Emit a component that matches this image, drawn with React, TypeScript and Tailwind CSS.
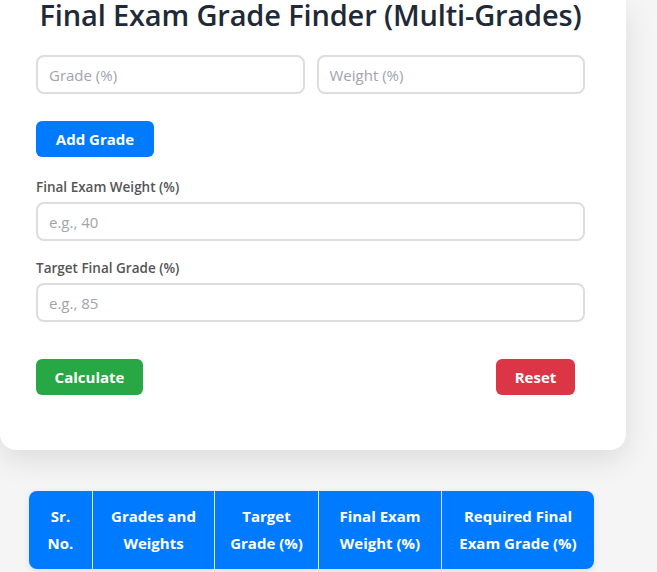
import React from "react";

// 成績入力フォームのスクリーン（上部はスクロールで切れている状態）
const HEADERS = [
  { label: ["Sr.", "No."], w: "w-[63px]" },
  { label: ["Grades and", "Weights"], w: "w-[122px]" },
  { label: ["Target", "Grade (%)"], w: "w-[104px]" },
  { label: ["Final Exam", "Weight (%)"], w: "w-[123px]" },
  { label: ["Required Final", "Exam Grade (%)"], w: "flex-1" },
];

const inputCls =
  "h-[39px] w-full rounded-lg border-2 border-[#dddddd] bg-white px-[11px] text-[15px] text-[#333] placeholder:text-[#a0a4ab] outline-none";

export default function App() {
  return (
    <div
      className="min-h-screen w-[657px] h-[572px] overflow-hidden bg-[#f5f5f5] text-[#333]"
      style={{ fontFamily: '"Open Sans", "Noto Sans", "Liberation Sans", sans-serif' }}
    >
      {/* カード */}
      <div className="w-[626px] rounded-b-2xl bg-white pl-[36px] pr-[41px] pb-[55px] shadow-[0_10px_30px_rgba(0,0,0,0.1)]">
        <h1 className="text-center text-[29px] font-semibold leading-[29px] text-[#1f2937] tracking-[-0.15px]">
          Final Exam Grade Finder (Multi-Grades)
        </h1>

        <div className="mt-[26px] flex gap-[12px]">
          <input className={inputCls} placeholder="Grade (%)" />
          <input className={inputCls} placeholder="Weight (%)" />
        </div>

        <button className="mt-[27px] h-[36px] w-[118px] rounded-md bg-[#007bff] text-[15px] font-bold text-white">
          Add Grade
        </button>

        <label className="mt-[21px] block text-[13.5px] font-semibold leading-[18px] text-[#555]">
          Final Exam Weight (%)
        </label>
        <input className={`${inputCls} mt-[6px]`} placeholder="e.g., 40" />

        <label className="mt-[18px] block text-[13.5px] font-semibold leading-[18px] text-[#555]">
          Target Final Grade (%)
        </label>
        <input className={`${inputCls} mt-[6px]`} placeholder="e.g., 85" />

        <div className="mt-[37px] flex items-center justify-between">
          <button className="h-[36px] w-[107px] rounded-md bg-[#28a745] text-[15px] font-bold text-white">
            Calculate
          </button>
          <button className="mr-[10px] h-[36px] w-[79px] rounded-md bg-[#dc3545] text-[15px] font-bold text-white">
            Reset
          </button>
        </div>
      </div>

      {/* 結果テーブルのヘッダー */}
      <div className="ml-[29px] mt-[41px] flex w-[565px] overflow-hidden rounded-lg bg-[#007bff] shadow-[0_2px_6px_rgba(0,0,0,0.1)]">
        {HEADERS.map((h, i) => (
          <div
            key={i}
            className={`${h.w} ${i > 0 ? "border-l border-[#dfe6ee]" : ""} flex flex-col items-center justify-center py-[12px] text-center text-[15px] font-bold leading-[27px] text-white`}
          >
            {h.label.map((l) => (
              <span key={l}>{l}</span>
            ))}
          </div>
        ))}
      </div>
    </div>
  );
}
